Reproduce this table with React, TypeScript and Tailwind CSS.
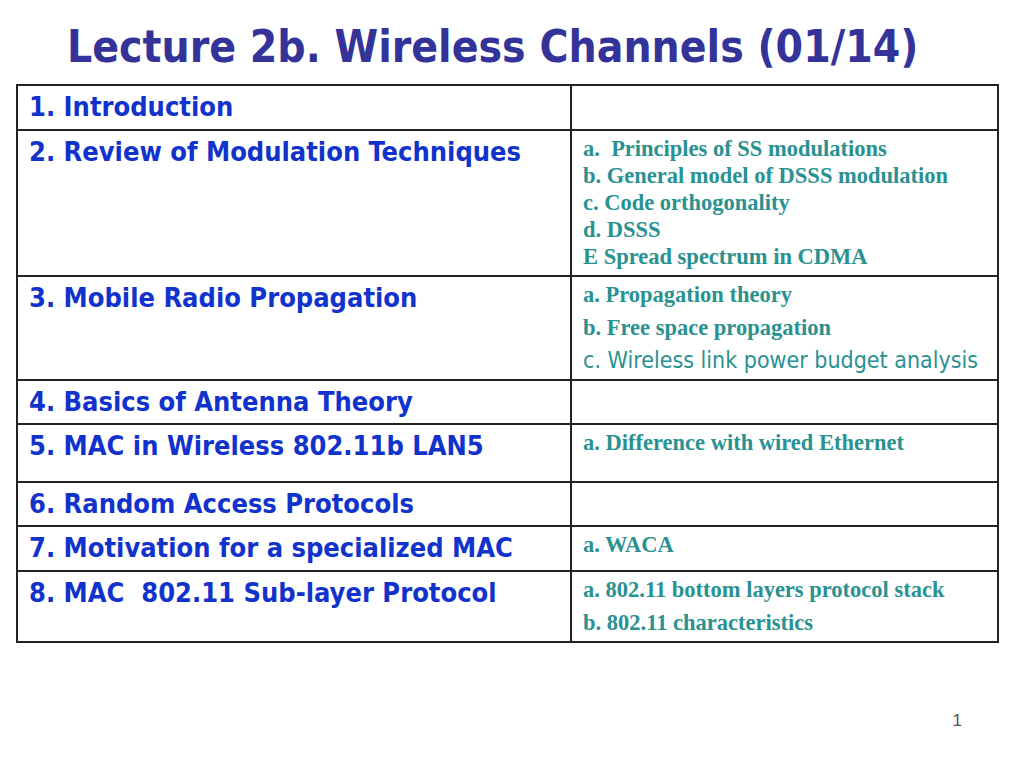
type Row = { h: string; title: string; sub?: string[]; wide?: boolean; comicLast?: boolean }

const rows: Row[] = [
  { h: "h-[45px]", title: "1. Introduction" },
  {
    h: "h-[146px]",
    title: "2. Review of Modulation Techniques",
    sub: [
      "a.\u00a0 Principles of SS modulations",
      "b. General model of DSSS modulation",
      "c. Code orthogonality",
      "d. DSSS",
      "E Spread spectrum in CDMA",
    ],
  },
  {
    h: "h-[104px]",
    title: "3. Mobile Radio Propagation",
    sub: ["a. Propagation theory", "b. Free space propagation", "c. Wireless link power budget analysis"],
    wide: true,
    comicLast: true,
  },
  { h: "h-[44px]", title: "4. Basics of Antenna Theory" },
  { h: "h-[58px]", title: "5. MAC in Wireless 802.11b LAN5", sub: ["a. Difference with wired Ethernet"] },
  { h: "h-[44px]", title: "6. Random Access Protocols" },
  { h: "h-[45px]", title: "7. Motivation for a specialized MAC", sub: ["a. WACA"] },
  {
    h: "h-[69px]",
    title: "8. MAC\u00a0 802.11 Sub-layer Protocol",
    sub: ["a. 802.11 bottom layers protocol stack", "b. 802.11 characteristics"],
    wide: true,
  },
]

export default function App() {
  return (
    <div className="h-[768px] w-[1024px] overflow-hidden bg-white">
      <h1 className="pl-[67px] pt-[21px] font-['DejaVu_Sans_Condensed','DejaVu_Sans',sans-serif] text-[44px] font-bold leading-[52px] text-[#333399]">
        Lecture 2b. Wireless Channels (01/14)
      </h1>

      <div className="ml-[16px] mt-[11px] w-[983px] border-2 border-[#222]">
        {rows.map((r, i) => (
          <div
            key={r.title}
            className={`grid grid-cols-[554px_1fr] ${r.h} ${i < rows.length - 1 ? "border-b-2 border-[#222]" : ""}`}
          >
            <div className="border-r-2 border-[#222] pl-[11px] pt-[6px] font-['DejaVu_Sans_Condensed','DejaVu_Sans',sans-serif] text-[27px] font-bold leading-[30px] text-[#1133cc]">
              {r.title}
            </div>
            <div
              className={`pl-[11px] font-['Liberation_Serif','Times_New_Roman',serif] text-[22.5px] font-bold text-[#2a9191] ${
                r.wide ? "pt-[1px] leading-[33px]" : "pt-[4px] leading-[27px]"
              }`}
            >
              {r.sub?.map((s, j) =>
                r.comicLast && j === r.sub!.length - 1 ? (
                  <div
                    key={s}
                    className="font-['DejaVu_Sans_Condensed','DejaVu_Sans',sans-serif] text-[23px] font-normal"
                  >
                    {s}
                  </div>
                ) : (
                  <div key={s}>{s}</div>
                )
              )}
            </div>
          </div>
        ))}
      </div>

      <div className="mt-[68px] flex justify-end pr-[62px] font-['Liberation_Sans',Arial,sans-serif] text-[17px] leading-[20px] text-[#555]">
        1
      </div>
    </div>
  )
}
